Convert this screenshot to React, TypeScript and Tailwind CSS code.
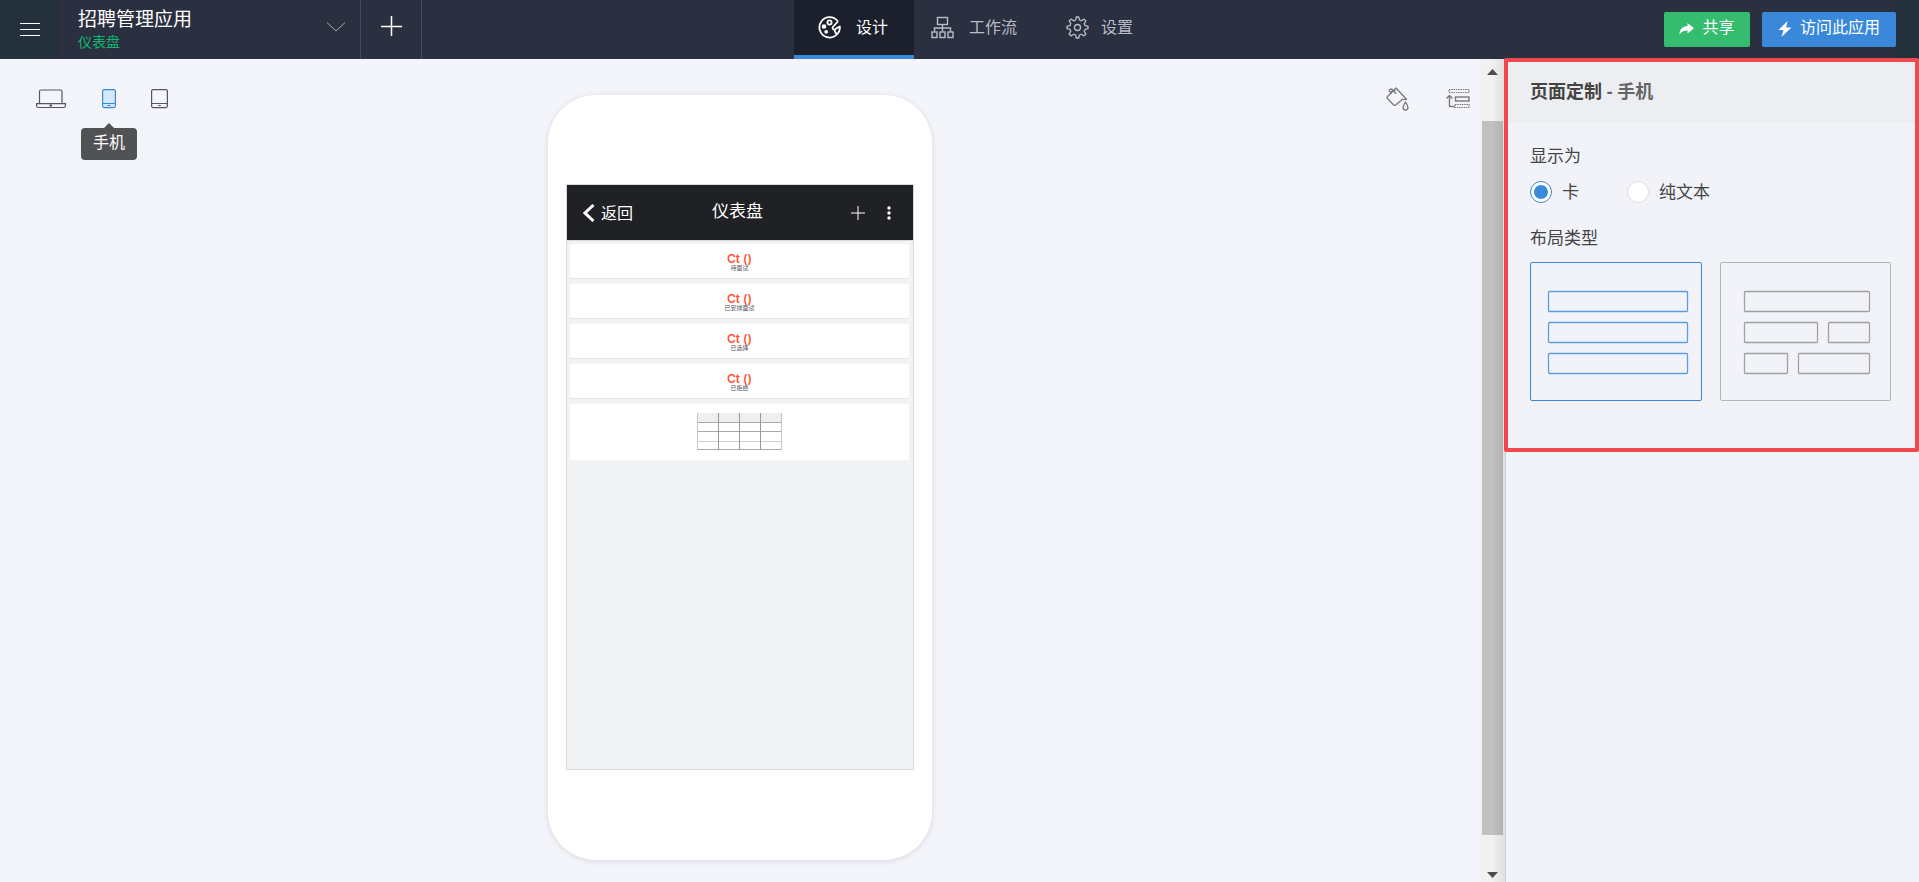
import { useState } from "react";

const counters = ["待面试", "已安排面试", "已选择", "已拒绝"];

function PaletteIcon() {
  return (
    <svg width="23" height="23" viewBox="0 0 23 23" fill="none" stroke="currentColor" strokeWidth="1.8" strokeLinejoin="round">
      <path d="M20 5.500A10.200 10.200 0 1 0 21.800 10.500l-4 2.300q-1.800 1.200-.8 2.800l1.200 2.200" />
      <path d="M20 5.500l-4.800 5q-1.400 1.800.6 3.300" />
      <circle cx="11.500" cy="6.500" r="2.100" />
      <circle cx="6" cy="10.500" r="1.400" fill="currentColor" />
      <circle cx="8.200" cy="15.800" r="1" fill="currentColor" />
    </svg>
  );
}

function WorkflowIcon() {
  return (
    <svg width="23" height="23" viewBox="0 0 23 23" fill="none" stroke="currentColor" strokeWidth="1.4">
      <rect x="6.500" y="1.500" width="10" height="7" />
      <path d="M11.500 8.500v7M3.500 15.500v-3.500h16v3.500" />
      <rect x="1" y="16" width="5" height="5.500" />
      <rect x="9" y="16" width="5" height="5.500" />
      <rect x="17" y="16" width="5" height="5.500" />
    </svg>
  );
}

function GearIcon() {
  return (
    <svg width="23" height="23" viewBox="0 0 23 23" fill="none" stroke="currentColor" strokeWidth="1.3" strokeLinejoin="round">
      <path d="M10.300 1h2.400l.7 3 1.900.8 2.700-1.700 1.900 1.900-1.700 2.700.8 1.900 3 .7v2.400l-3 .7-.8 1.900 1.700 2.700-1.900 1.900-2.700-1.700-1.900.8-.7 3h-2.400l-.7-3-1.900-.8L5 19.900 3.100 18l1.700-2.700-.8-1.900-3-.7v-2.400l3-.7.8-1.900L3.100 5 5 3.100l2.700 1.700 1.900-.8z" />
      <circle cx="11.500" cy="11.500" r="3" />
    </svg>
  );
}

function LaptopIcon() {
  return (
    <svg width="30" height="20" viewBox="0 0 30 20" fill="none" stroke="#55565e" strokeWidth="1.200">
      <path d="M3.500 14.500V2.500q0-1.500 1.500-1.500h19.500q1.500 0 1.500 1.500v12" />
      <path d="M.6 14.600h28.800v2.400q0 1.500-1.500 1.500H2.100q-1.500 0-1.500-1.500z" />
      <path d="M13.500 16.500h2.500" strokeWidth="2" />
    </svg>
  );
}

function PhoneIcon() {
  return (
    <svg width="14" height="20" viewBox="0 0 14 20" fill="#d6e8fd" stroke="#3a88da" strokeWidth="1.200">
      <rect x=".6" y=".6" width="12.800" height="18" rx="1.500" />
      <path d="M.6 14.500h12.800M5.500 16.500h3" />
    </svg>
  );
}

function TabletIcon() {
  return (
    <svg width="17" height="20" viewBox="0 0 17 20" fill="none" stroke="#55565e" strokeWidth="1.200">
      <rect x=".6" y=".6" width="15.800" height="18" rx="1.500" />
      <path d="M.6 14.500h15.800M7.200 16.500h2.600" />
    </svg>
  );
}

function PaintIcon() {
  return (
    <svg width="24" height="24" viewBox="0 0 24 24" fill="none" stroke="#77787d" strokeWidth="1.300" strokeLinejoin="round">
      <path d="M10 1l10.500 11.300h-4L9.700 18q-1 .8-2 0L1.500 11.500q-.8-1 0-2z" />
      <path d="M5.500 5.500C2.500 4.500 3 2 5 2c2.500 0 2.500 4 5.500 4.500M5 7c0-2 1.500-3.500 4.500-3.500" />
      <path d="M19.500 15c-1.500 2.500-2.500 4-2.500 5.500a2.500 2.500 0 0 0 5 0c0-1.500-1-3-2.500-5.500z" />
    </svg>
  );
}

function ArrangeIcon() {
  return (
    <svg width="24" height="22" viewBox="0 0 24 22" fill="none" stroke="#77787d" strokeWidth="1.200">
      <path d="M3 2.500h20v3H3zM9 17.500h14v3H9z" strokeDasharray="1.500 .8" />
      <rect x="9.500" y="10" width="13.500" height="4" strokeWidth="1.400" />
      <path d="M3.500 9v10.500h5M.5 11.500l3-3 3 3" strokeWidth="1.400" />
    </svg>
  );
}

function Header() {
  return (
    <header className="grid h-[59px] grid-cols-[1fr_auto_1fr] bg-[#2b3040] text-white">
      <div className="flex">
        <button aria-label="menu" className="flex w-[59px] flex-col items-center justify-center gap-[5px] bg-[#25303d]">
          <span className="h-px w-5 bg-white" />
          <span className="h-px w-5 bg-white" />
          <span className="h-px w-5 bg-white" />
        </button>
        <button className="flex w-[302px] justify-between border-r border-[#444b5d] pt-[7px] pr-3.5 pl-[19px] text-left">
          <span className="flex flex-col">
            <span className="text-[19px] leading-6">招聘管理应用</span>
            <span className="text-[14px] leading-[22px] text-[#0db870]">仪表盘</span>
          </span>
          <svg width="20" height="12" viewBox="0 0 20 12" fill="none" stroke="#a5a7ad" className="mt-3.5">
            <path d="M1 1.500l9 8.500 9-8.500" />
          </svg>
        </button>
        <button aria-label="add" className="flex w-[61px] justify-center border-r border-[#444b5d] pt-4">
          <svg width="21" height="21" viewBox="0 0 21 21" stroke="#fff" strokeWidth="1.500">
            <path d="M10.500 0v20M0 10.500h21" />
          </svg>
        </button>
      </div>

      <nav className="flex pl-6 text-[16px] text-[#b9bdcb]">
        <a href="#design" className="flex w-[120px] items-center gap-[15px] border-b-4 border-[#3a88da] bg-[#1b202c] pl-6 text-white">
          <PaletteIcon />
          <span className="pb-0.5">设计</span>
        </a>
        <a href="#workflow" className="flex w-34 items-center gap-[15px] border-b-4 border-transparent pl-[17px]">
          <WorkflowIcon />
          <span className="pb-0.5">工作流</span>
        </a>
        <a href="#settings" className="flex items-center gap-3 border-b-4 border-transparent px-4">
          <GearIcon />
          <span className="pb-0.5">设置</span>
        </a>
      </nav>

      <div className="flex items-start justify-end">
        <button className="mt-3 mr-3 flex h-[35px] w-[86px] items-center justify-center gap-2 rounded-xs bg-[#34bd6e] pb-1.5 text-[16px]">
          <svg width="15" height="14" viewBox="0 0 15 14" fill="currentColor" className="mt-1">
            <path d="M8.500 1l6.500 5.200-6.500 5.300V8.500C4.500 8.500 2 9.800.5 13 .5 7.500 3.500 4 8.500 4z" />
          </svg>
          共享
        </button>
        <button className="mt-3 flex h-[35px] w-[134px] items-center justify-center gap-2 rounded-xs bg-[#3a88da] pb-1.5 text-[16px]">
          <svg width="14" height="16" viewBox="0 0 14 16" fill="currentColor" className="mt-1">
            <path d="M9.500 0L.5 9h5L3.500 16l10-9.500H8.200z" />
          </svg>
          访问此应用
        </button>
        <div className="h-full w-[23px] bg-[#25303d]" />
      </div>
    </header>
  );
}

function PhonePreview() {
  return (
    <div className="mt-9 w-96 self-start rounded-[48px] bg-white px-[18px] pt-[89px] pb-[90px] shadow-[0_1px_6px_rgba(0,0,0,0.12)]">
      <div className="h-[586px] border border-[#d9dadd] bg-[#f2f3f5]">
        <div className="grid h-[55px] grid-cols-3 items-center bg-[#202124] pr-[21px] pl-4 text-white">
          <button className="flex items-center gap-1.5 text-[16px]">
            <svg width="12" height="18" viewBox="0 0 12 18" fill="none" stroke="currentColor" strokeWidth="3">
              <path d="M10.500 1L2 9l8.500 8" />
            </svg>
            返回
          </button>
          <h1 className="pb-1 text-center text-[17px]">仪表盘</h1>
          <div className="flex items-center justify-end gap-[21px]">
            <button aria-label="add record">
              <svg width="14" height="14" viewBox="0 0 14 14" stroke="currentColor">
                <path d="M7 0v14M0 7h14" />
              </svg>
            </button>
            <button aria-label="more">
              <svg width="6" height="14" viewBox="0 0 6 14" fill="currentColor">
                <circle cx="3" cy="2" r="1.700" />
                <circle cx="3" cy="7" r="1.700" />
                <circle cx="3" cy="12" r="1.700" />
              </svg>
            </button>
          </div>
        </div>
        <div className="flex flex-col gap-1.5 border-t border-[#d9dadd] pt-[3px] pr-1 pl-[3px]">
          {counters.map((label) => (
            <div key={label} className="flex h-[34px] flex-col items-center rounded-xs bg-white pt-2 shadow-[0_1px_1px_rgba(0,0,0,0.06)]">
              <span className="font-['Inter',sans-serif] text-[12px] leading-[13px] font-semibold text-[#ff5338]">Ct ()</span>
              <span className="text-[6px] leading-[6px] text-[#55565e]">{label}</span>
            </div>
          ))}
          <div className="flex h-14 justify-center rounded-xs bg-white pt-[9px]">
            <svg width="85" height="37" viewBox="0 0 85 37" fill="none" stroke="#a9a9ab">
              <rect width="85" height="9" fill="#efefef" stroke="none" />
              <path d="M0 9.500h85M0 18.500h85M0 36.500h85" />
              <path d="M0 28.500h85" stroke="#cfcfd0" />
              <path d="M.5 0v37M84.500 0v37" stroke="#c6c6c8" />
              <path d="M21.500 0v37M42.500 0v37M63.500 0v37" stroke="#98989a" />
            </svg>
          </div>
        </div>
      </div>
    </div>
  );
}

function Canvas() {
  return (
    <main className="grid flex-1 grid-cols-[1fr_auto_1fr] bg-[#f4f5fa] pb-[22px]">
      <div className="flex items-start pt-[30px] pl-9">
        <button aria-label="电脑" className="mr-9">
          <LaptopIcon />
        </button>
        <div className="relative mr-[35px]">
          <button aria-label="手机" className="block">
            <PhoneIcon />
          </button>
          <div role="tooltip" className="absolute top-[39px] left-1/2 -translate-x-1/2 rounded-sm bg-[#515254] px-3 pt-0.5 pb-1.5 text-[16px] leading-6 whitespace-nowrap text-white">
            <span className="absolute -top-[5px] left-1/2 -translate-x-1/2 border-x-[5px] border-b-[5px] border-x-transparent border-b-[#515254]" />
            手机
          </div>
        </div>
        <button aria-label="平板">
          <TabletIcon />
        </button>
      </div>
      <PhonePreview />
      <div className="flex items-start justify-end gap-9 pt-7 pr-2.5">
        <button aria-label="主题">
          <PaintIcon />
        </button>
        <button aria-label="排列">
          <ArrangeIcon />
        </button>
      </div>
    </main>
  );
}

function Scrollbar() {
  return (
    <div className="flex w-[25px] flex-col items-center bg-linear-to-r from-[#f1f1f1] from-50% to-[#dfdfe3] pt-2.5 pb-1">
      <svg width="11" height="6" viewBox="0 0 11 6" fill="#4d4d4d">
        <path d="M0 6L5.500 0 11 6z" />
      </svg>
      <div className="mt-[46px] mb-[37px] w-[21px] flex-1 bg-linear-to-r from-[#c1c1c1] from-50% to-[#b2b2b2]" />
      <svg width="11" height="6" viewBox="0 0 11 6" fill="#4d4d4d">
        <path d="M0 0L5.500 6 11 0z" />
      </svg>
    </div>
  );
}

function Radio({ label, checked, onChange }: { label: string; checked: boolean; onChange: () => void }) {
  return (
    <label className="flex items-center gap-2.5">
      <input
        type="radio"
        name="display"
        checked={checked}
        onChange={onChange}
        className="grid size-[22px] appearance-none place-items-center rounded-full border border-[#dfe0e6] bg-white checked:border-[#3a88da] checked:before:size-3.5 checked:before:rounded-full checked:before:bg-[#3a88da]"
      />
      {label}
    </label>
  );
}

function SidePanel() {
  const [display, setDisplay] = useState("card");
  const [layout, setLayout] = useState("single");

  return (
    <aside className="w-[414px] border-l border-[#cdcfe0] bg-[#f2f3f9] text-[#444]">
      <section className="relative h-[393px]">
        <div className="pointer-events-none absolute -top-px right-0 bottom-0 -left-0.5 rounded-xs border-4 border-[#ee4a4d]" />
        <h2 className="h-16 bg-[#edeef2] pt-5 pl-6 text-[18px] leading-6 font-bold">
          页面定制 <span className="text-[#666]">- 手机</span>
        </h2>
        <div className="px-6 text-[17px] leading-6">
          <p className="pt-[21px]">显示为</p>
          <div className="mt-3 flex gap-12">
            <Radio label="卡" checked={display === "card"} onChange={() => setDisplay("card")} />
            <Radio label="纯文本" checked={display === "text"} onChange={() => setDisplay("text")} />
          </div>
          <p className="mt-[22px]">布局类型</p>
          <div className="mt-3 flex gap-[18px]">
            <button
              aria-label="单列"
              onClick={() => setLayout("single")}
              className={`rounded-xs border ${layout === "single" ? "border-[#3a88da] text-[#5a9ee2]" : "border-[#b5b6b8] text-[#a0a1a4]"}`}
            >
              <svg width="170" height="137" viewBox="0 0 170 137" fill="none" stroke="currentColor" strokeWidth="1.300">
                <rect x="17.500" y="28.500" width="139" height="20" rx="1" />
                <rect x="17.500" y="59.500" width="139" height="20" rx="1" />
                <rect x="17.500" y="90.500" width="139" height="20" rx="1" />
              </svg>
            </button>
            <button
              aria-label="多列"
              onClick={() => setLayout("multi")}
              className={`rounded-xs border ${layout === "multi" ? "border-[#3a88da] text-[#5a9ee2]" : "border-[#b5b6b8] text-[#a0a1a4]"}`}
            >
              <svg width="169" height="137" viewBox="0 0 169 137" fill="none" stroke="currentColor" strokeWidth="1.300">
                <rect x="23.500" y="28.500" width="125" height="20" rx="1" />
                <rect x="23.500" y="59.500" width="73" height="20" rx="1" />
                <rect x="107.500" y="59.500" width="41" height="20" rx="1" />
                <rect x="23.500" y="90.500" width="43" height="20" rx="1" />
                <rect x="77.500" y="90.500" width="71" height="20" rx="1" />
              </svg>
            </button>
          </div>
        </div>
      </section>
    </aside>
  );
}

export default function App() {
  return (
    <div className="flex min-h-screen flex-col font-['Open_Sans','Noto_Sans_CJK_SC',sans-serif]">
      <Header />
      <div className="flex flex-1">
        <Canvas />
        <Scrollbar />
        <SidePanel />
      </div>
    </div>
  );
}
